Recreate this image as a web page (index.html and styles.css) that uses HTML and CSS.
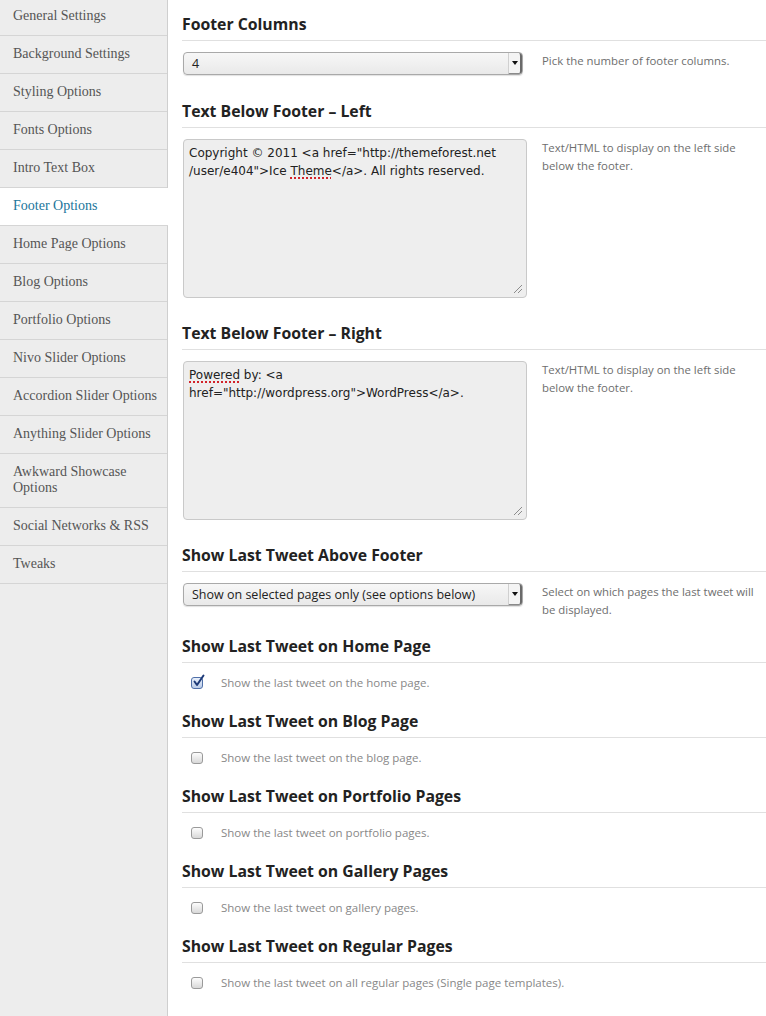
FILE: index.html
```html
<!DOCTYPE html>
<html lang="en">

<head>
    <meta charset="UTF-8">
    <meta name="viewport" content="width=device-width, initial-scale=1.0">
    <title>Theme Options - Footer Options</title>
    <link rel="stylesheet" href="styles.css">
</head>

<body>
    <div class="page">

        <ul class="tabs">
            <li>General Settings</li>
            <li>Background Settings</li>
            <li>Styling Options</li>
            <li>Fonts Options</li>
            <li>Intro Text Box</li>
            <li class="active">Footer Options</li>
            <li>Home Page Options</li>
            <li>Blog Options</li>
            <li>Portfolio Options</li>
            <li>Nivo Slider Options</li>
            <li>Accordion Slider Options</li>
            <li>Anything Slider Options</li>
            <li>Awkward Showcase<br>Options</li>
            <li>Social Networks &amp; RSS</li>
            <li>Tweaks</li>
        </ul>

        <div class="options">

            <div class="option">
                <h3>Footer Columns</h3>
                <div class="row">
                    <div class="control">
                        <div class="select"><span>4</span><i class="arrow"></i></div>
                    </div>
                    <p class="desc">Pick the number of footer columns.</p>
                </div>
            </div>

            <div class="option">
                <h3>Text Below Footer &ndash; Left</h3>
                <div class="row">
                    <div class="control">
                        <div class="textarea">Copyright &copy; 2011 &lt;a href="http://themeforest.net<br>/user/e404"&gt;Ice <span class="typo">Theme</span>&lt;/a&gt;. All rights reserved.<i class="grip"><svg width="10" height="10" viewBox="0 0 10 10"><path d="M9 1 L1 9 M9 5 L5 9" stroke="#8c8c8c" stroke-width="1" fill="none"/></svg></i></div>
                    </div>
                    <p class="desc">Text/HTML to display on the left side below the footer.</p>
                </div>
            </div>

            <div class="option">
                <h3>Text Below Footer &ndash; Right</h3>
                <div class="row">
                    <div class="control">
                        <div class="textarea"><span class="typo">Powered</span> by: &lt;a<br>href="http://wordpress.org"&gt;WordPress&lt;/a&gt;.<i class="grip"><svg width="10" height="10" viewBox="0 0 10 10"><path d="M9 1 L1 9 M9 5 L5 9" stroke="#8c8c8c" stroke-width="1" fill="none"/></svg></i></div>
                    </div>
                    <p class="desc">Text/HTML to display on the left side below the footer.</p>
                </div>
            </div>

            <div class="option">
                <h3>Show Last Tweet Above Footer</h3>
                <div class="row">
                    <div class="control">
                        <div class="select"><span>Show on selected pages only (see options below)</span><i class="arrow"></i></div>
                    </div>
                    <p class="desc">Select on which pages the last tweet will be displayed.</p>
                </div>
            </div>

            <div class="option">
                <h3>Show Last Tweet on Home Page</h3>
                <div class="row check-row">
                    <i class="check checked"><svg width="15" height="15" viewBox="0 0 15 15"><path d="M3.5 7.5 L6 11 L12.5 1.5" stroke="#1d3a78" stroke-width="2" fill="none" stroke-linecap="round" stroke-linejoin="round"/></svg></i>
                    <span class="label">Show the last tweet on the home page.</span>
                </div>
            </div>

            <div class="option">
                <h3>Show Last Tweet on Blog Page</h3>
                <div class="row check-row">
                    <i class="check"></i>
                    <span class="label">Show the last tweet on the blog page.</span>
                </div>
            </div>

            <div class="option">
                <h3>Show Last Tweet on Portfolio Pages</h3>
                <div class="row check-row">
                    <i class="check"></i>
                    <span class="label">Show the last tweet on portfolio pages.</span>
                </div>
            </div>

            <div class="option">
                <h3>Show Last Tweet on Gallery Pages</h3>
                <div class="row check-row">
                    <i class="check"></i>
                    <span class="label">Show the last tweet on gallery pages.</span>
                </div>
            </div>

            <div class="option">
                <h3>Show Last Tweet on Regular Pages</h3>
                <div class="row check-row">
                    <i class="check"></i>
                    <span class="label">Show the last tweet on all regular pages (Single page templates).</span>
                </div>
            </div>

        </div>
    </div>
</body>

</html>
```

FILE: styles.css
```css
        body {
            margin: 0;
            padding: 0;
            background-color: #fff;
            font-family: "Open Sans", "DejaVu Sans", sans-serif;
            color: #222;
        }

        .page {
            display: flex;
            min-height: 1016px;
            overflow: hidden;
        }

        ul.tabs {
            list-style: none;
            margin: -2px 0 0 0;
            padding: 0;
            width: 167px;
            flex: none;
            background-color: #ededed;
            border-right: 1px solid #cfcfcf;
        }

        ul.tabs li {
            padding: 10px 4px 11px 13px;
            line-height: 16px;
            font-family: "Liberation Serif", "DejaVu Serif", serif;
            font-size: 14px;
            color: #555;
            border-bottom: 1px solid #d5d5d5;
        }

        ul.tabs li.active {
            background-color: #fff;
            color: #21759b;
            margin-right: -1px;
        }

        .options {
            flex: 1;
            padding: 14px 0 0 14px;
        }

        .option h3 {
            margin: 0;
            font-size: 15.8px;
            line-height: 20px;
            font-weight: bold;
            color: #222;
            padding-bottom: 6px;
            border-bottom: 1px solid #e0e0e0;
        }

        .row {
            display: flex;
            align-items: flex-start;
            padding: 11px 0 16px 0;
        }

        .control {
            width: 345px;
            flex: none;
            padding-left: 1px;
        }

        .desc {
            margin: 0 0 1px 14px;
            width: 222px;
            font-size: 11.4px;
            line-height: 18px;
            color: #6e6e6e;
        }

        .select {
            display: flex;
            align-items: center;
            box-sizing: border-box;
            width: 340px;
            height: 23px;
            margin-bottom: 10px;
            border: 1px solid #a9a9a9;
            border-radius: 4px;
            background: linear-gradient(#f7f7f7, #e9e9e9);
            box-shadow: 0 1px 1px rgba(0, 0, 0, 0.12);
        }

        .select span {
            flex: 1;
            padding-left: 8px;
            font-size: 12.5px;
            color: #222;
        }

        .select .arrow {
            position: relative;
            width: 14px;
            height: 21px;
            border-left: 1px solid #d0d0d0;
            border-right: 2px solid #6a6a6a;
            border-bottom: 1px solid #8a8a8a;
            border-radius: 0 3px 3px 0;
            background: #f4f4f4;
            box-sizing: border-box;
        }

        .select .arrow::after {
            content: "";
            position: absolute;
            left: 3px;
            top: 8px;
            border-left: 3px solid transparent;
            border-right: 3px solid transparent;
            border-top: 4px solid #111;
        }

        .textarea {
            position: relative;
            box-sizing: border-box;
            width: 344px;
            height: 159px;
            margin-bottom: 9px;
            padding: 4px 5px;
            border: 1px solid #c9c9c9;
            border-radius: 4px;
            background-color: #eee;
            font-family: "DejaVu Sans", "Open Sans", sans-serif;
            font-size: 12px;
            line-height: 18px;
            color: #222;
        }

        .textarea .typo {
            text-decoration: underline dotted #d2232a;
            text-decoration-thickness: 2px;
            text-underline-offset: 2px;
        }

        .textarea .grip {
            position: absolute;
            right: 3px;
            bottom: 3px;
            width: 10px;
            height: 10px;
            line-height: 0;
        }

        .check-row {
            align-items: center;
            padding-bottom: 19px;
        }

        .check {
            position: relative;
            box-sizing: border-box;
            width: 12px;
            height: 12px;
            margin-left: 9px;
            border: 1px solid #9a9a9a;
            border-radius: 3px;
            background: linear-gradient(#fdfdfd, #d8d8d8);
            flex: none;
        }

        .check.checked {
            border-color: #4f6fa8;
            background: linear-gradient(#e9f0fb, #b9cbe8);
        }

        .check svg {
            position: absolute;
            left: -1px;
            top: -4px;
        }

        .label {
            margin-left: 18px;
            font-size: 11.5px;
            line-height: 18px;
            color: #888;
        }
```
